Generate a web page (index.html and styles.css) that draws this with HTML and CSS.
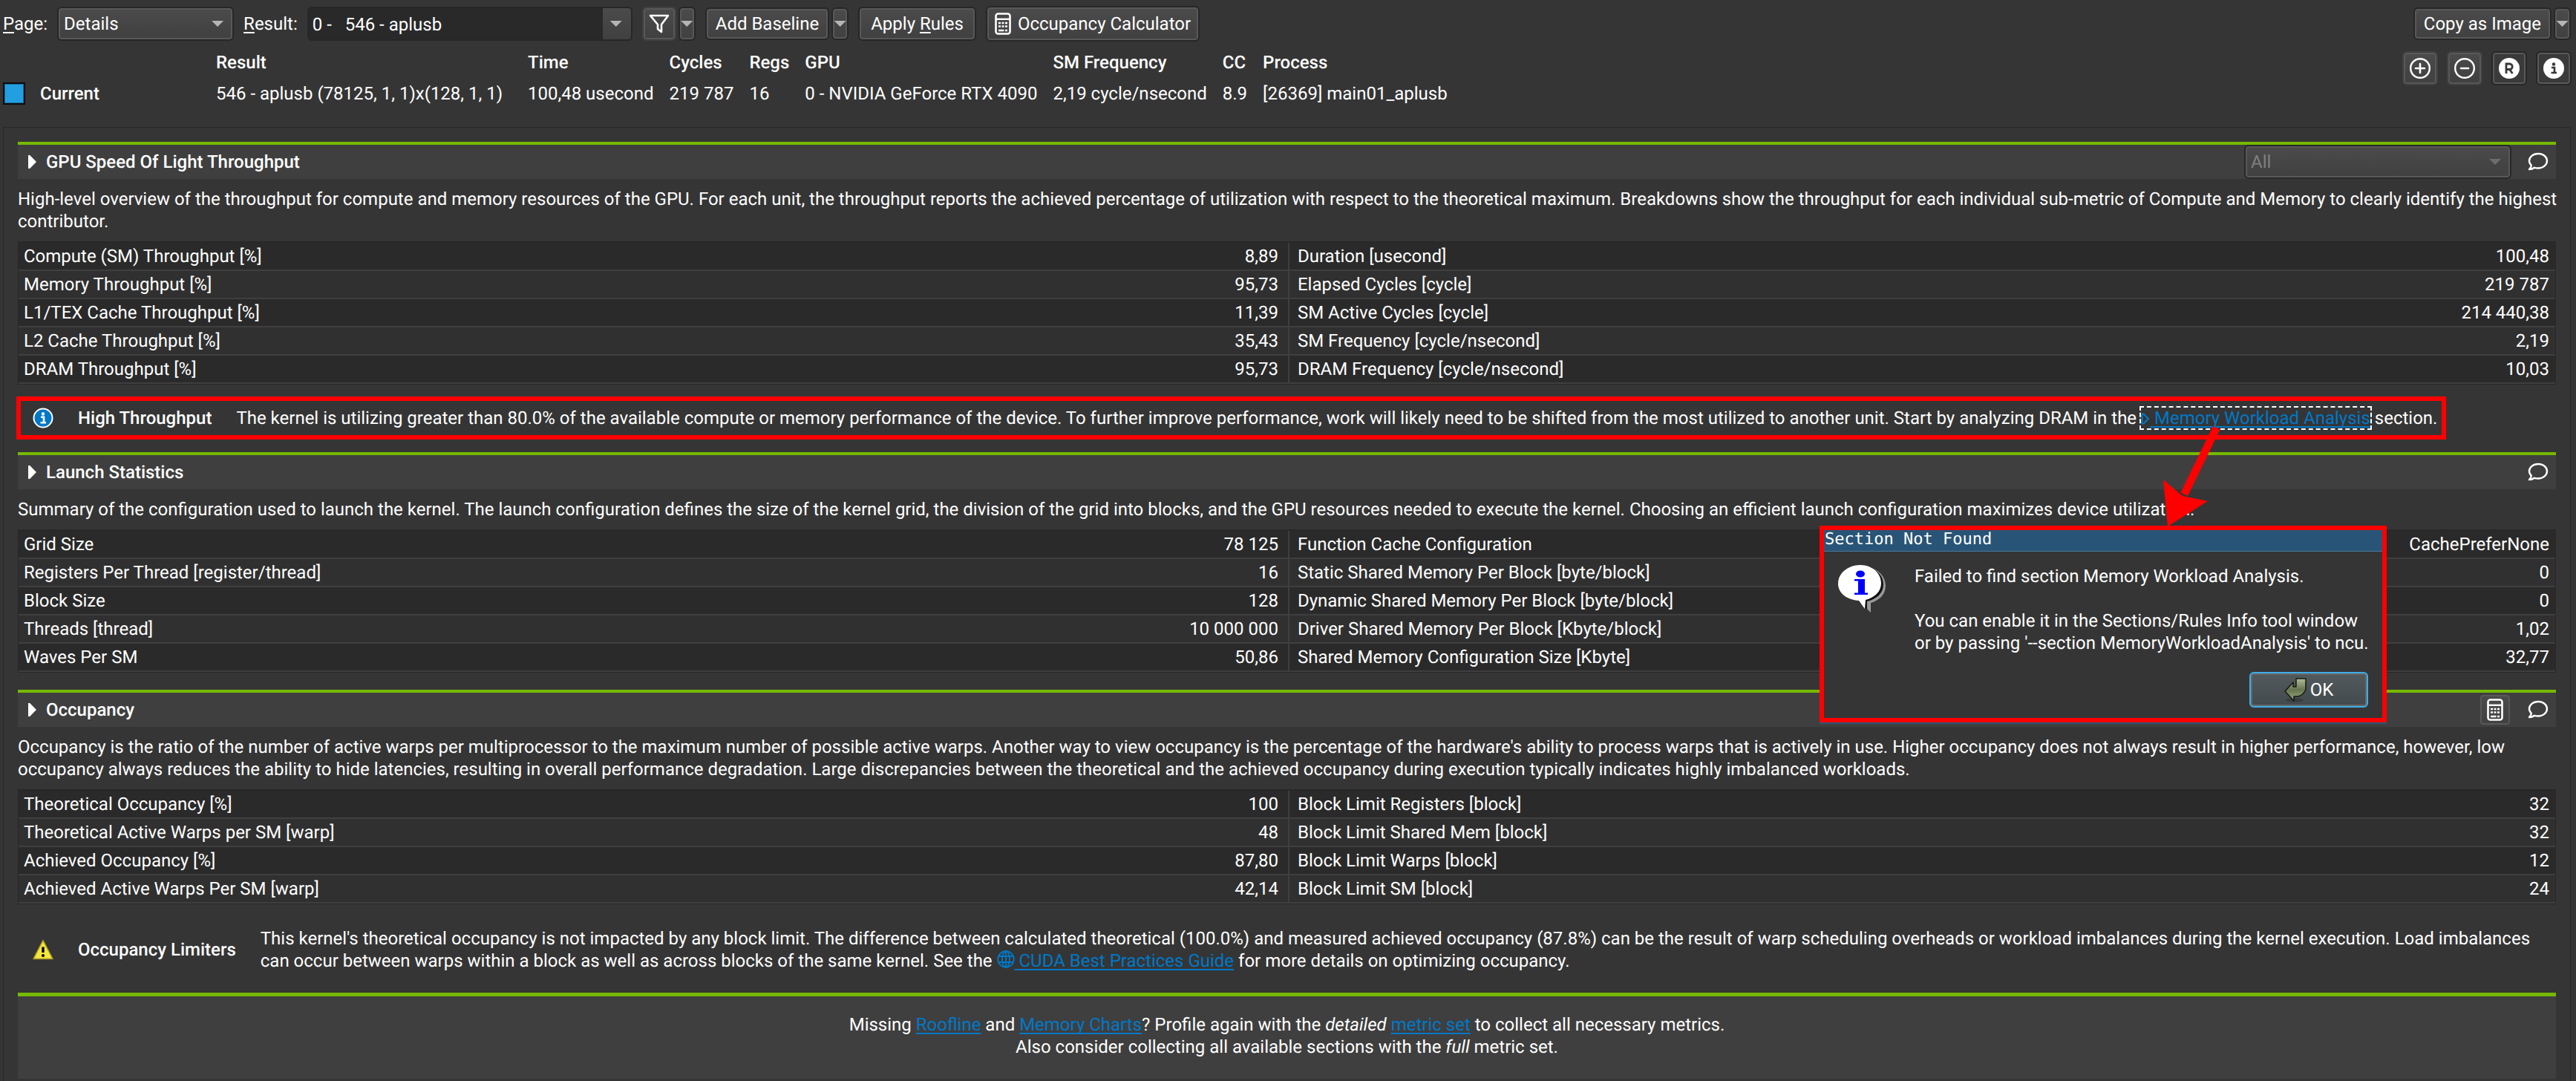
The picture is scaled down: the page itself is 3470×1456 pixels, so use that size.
FILE: index.html
```html
<!DOCTYPE html>
<html lang="en">
<head>
<meta charset="utf-8">
<title>Details - aplusb</title>
<link rel="stylesheet" href="styles.css">
</head>
<body>
<svg class="sprite" aria-hidden="true">
  <symbol id="bubble" viewBox="0 0 28 26"><path d="M14 2C7.300 2 2 6.300 2 11.600c0 2.500 1.100 4.600 2.900 6.300-.3 1.900-1.300 3.600-2.900 5.200 2.700 0 5-.8 7-2.300 1.600.5 3.200.7 5 .7 6.700 0 12-4.300 12-9.900S20.700 2 14 2z" fill="none" stroke="#fff" stroke-width="2.400" stroke-linejoin="round"/></symbol>
  <symbol id="calc" viewBox="0 0 22 30"><rect x="1.500" y="1.500" width="19" height="27" rx="3" fill="none" stroke="#fff" stroke-width="2.600"/><path d="M2 8.800h18" stroke="#fff" stroke-width="2.400"/><path d="M5 14h3M9.500 14h3M14 14h3M5 18.500h3M9.500 18.500h3M14 18.500h3M5 24h7.500M14 24h3" stroke="#fff" stroke-width="2.600"/></symbol>
</svg>

<header class="toolbar">
  <label for="page"><u>P</u>age:</label>
  <span class="combo combo-page"><select id="page"><option>Details</option></select></span>
  <label for="result"><u>R</u>esult:</label>
  <span class="combo combo-result"><select id="result"><option>0 -&nbsp;&nbsp; 546 - aplusb</option></select></span>
  <span class="split">
    <button class="btn btn-flat btn-filter" aria-label="Filter"><svg width="28" height="26" viewBox="0 0 28 26"><path d="M2 2h24L17 14v10l-5-4v-6z" fill="none" stroke="#fff" stroke-width="2.600" stroke-linejoin="round"/></svg></button>
    <button class="btn btn-drop btn-tall" aria-label="Filter options"></button>
  </span>
  <span class="split">
    <button class="btn">Add Baseline</button>
    <button class="btn btn-drop" aria-label="Baseline options"></button>
  </span>
  <button class="btn btn-tall btn-wide"><span>Apply <u>R</u>ules</span></button>
  <button class="btn btn-tallest"><svg width="22" height="30"><use href="#calc"/></svg>Occupancy Calculator</button>
  <span class="split push">
    <button class="btn">Copy as Image</button>
    <button class="btn btn-drop" aria-label="Copy options"></button>
  </span>
</header>

<div class="summary">
  <table class="results">
    <thead><tr><th class="col-name"></th><th class="col-result">Result</th><th>Time</th><th>Cycles</th><th>Regs</th><th>GPU</th><th>SM Frequency</th><th>CC</th><th>Process</th></tr></thead>
    <tbody><tr><th><span class="current"><i class="swatch"></i>Current</span></th><td>546 - aplusb (78125, 1, 1)x(128, 1, 1)</td><td>100,48 usecond</td><td>219 787</td><td>16</td><td>0 - NVIDIA GeForce RTX 4090</td><td>2,19 cycle/nsecond</td><td>8.9</td><td>[26369] main01_aplusb</td></tr></tbody>
  </table>
  <div class="tools">
    <button class="btn btn-flat btn-icon" aria-label="Expand all"><svg width="30" height="30" viewBox="0 0 30 30"><g fill="none" stroke="#fff"><circle cx="15" cy="15" r="12.800" stroke-width="2.400"/><path d="M9 15h12M15 9v12" stroke-width="2.600" stroke-linecap="round"/></g></svg></button>
    <button class="btn btn-flat btn-icon" aria-label="Collapse all"><svg width="30" height="30" viewBox="0 0 30 30"><g fill="none" stroke="#fff"><circle cx="15" cy="15" r="12.800" stroke-width="2.400"/><path d="M10 15h10" stroke-width="2.600" stroke-linecap="round"/></g></svg></button>
    <button class="btn btn-icon btn-on" aria-label="Rules"><svg width="30" height="30" viewBox="0 0 30 30"><circle cx="15" cy="15" r="14" fill="#fff"/><path d="M11 22V9h4.500a3.500 3.500 0 0 1 0 7.500H11M15.500 16.500L19.500 22" fill="none" stroke="#383838" stroke-width="2.800"/></svg></button>
    <button class="btn btn-icon btn-on" aria-label="Info"><svg width="30" height="30" viewBox="0 0 30 30"><circle cx="15" cy="15" r="14" fill="#fff"/><circle cx="15" cy="9.500" r="2.200" fill="#383838"/><path d="M12 14h4v7M11.500 21h7.500" fill="none" stroke="#383838" stroke-width="2.600"/></svg></button>
  </div>
</div>

<main class="frame">
  <section class="section">
    <div class="bar">
      <h2>GPU Speed Of Light Throughput</h2>
      <span class="combo combo-all"><select disabled aria-label="Breakdown"><option>All</option></select></span>
      <button class="plain" aria-label="Comment"><svg width="28" height="26"><use href="#bubble"/></svg></button>
    </div>
    <p class="about">High-level overview of the throughput for compute and memory resources of the GPU. For each unit, the throughput reports the achieved percentage of utilization with respect to the theoretical maximum. Breakdowns show the throughput for each individual sub-metric of Compute and Memory to clearly identify the highest contributor.</p>
    <table class="metrics">
      <tr><td>Compute (SM) Throughput [%]</td><td>8,89</td><td>Duration [usecond]</td><td>100,48</td></tr>
      <tr><td>Memory Throughput [%]</td><td>95,73</td><td>Elapsed Cycles [cycle]</td><td>219 787</td></tr>
      <tr><td>L1/TEX Cache Throughput [%]</td><td>11,39</td><td>SM Active Cycles [cycle]</td><td>214 440,38</td></tr>
      <tr><td>L2 Cache Throughput [%]</td><td>35,43</td><td>SM Frequency [cycle/nsecond]</td><td>2,19</td></tr>
      <tr><td>DRAM Throughput [%]</td><td>95,73</td><td>DRAM Frequency [cycle/nsecond]</td><td>10,03</td></tr>
    </table>
    <div class="rule rule-marked">
      <svg class="rule-icon" width="28" height="28" viewBox="0 0 28 28"><circle cx="14" cy="14" r="12.500" fill="#0078c8" stroke="#fff" stroke-width="2"/><circle cx="14" cy="8.500" r="2.200" fill="#fff"/><path d="M11 12.800h4v7M10.500 20.300h7.500" fill="none" stroke="#fff" stroke-width="2.600"/></svg>
      <h3>High Throughput</h3>
      <p>The kernel is utilizing greater than 80.0% of the available compute or memory performance of the device. To further improve performance, work will likely need to be shifted from the most utilized to another unit. Start by analyzing DRAM in the <a class="focused" href="#memory"><svg class="glyph" width="12" height="18" viewBox="0 0 12 18"><path d="M1.500 2.500v13h2l6.500-6.500-6.500-6.500z" fill="none" stroke="#0078c8" stroke-width="2.200" stroke-linejoin="round"/></svg> Memory Workload Analysis</a> section.</p>
    </div>
  </section>

  <section class="section">
    <div class="bar">
      <h2>Launch Statistics</h2>
      <button class="plain" aria-label="Comment"><svg width="28" height="26"><use href="#bubble"/></svg></button>
    </div>
    <p class="about">Summary of the configuration used to launch the kernel. The launch configuration defines the size of the kernel grid, the division of the grid into blocks, and the GPU resources needed to execute the kernel. Choosing an efficient launch configuration maximizes device utilization.</p>
    <table class="metrics metrics-last">
      <tr><td>Grid Size</td><td>78 125</td><td>Function Cache Configuration</td><td>CachePreferNone</td></tr>
      <tr><td>Registers Per Thread [register/thread]</td><td>16</td><td>Static Shared Memory Per Block [byte/block]</td><td>0</td></tr>
      <tr><td>Block Size</td><td>128</td><td>Dynamic Shared Memory Per Block [byte/block]</td><td>0</td></tr>
      <tr><td>Threads [thread]</td><td>10 000 000</td><td>Driver Shared Memory Per Block [Kbyte/block]</td><td>1,02</td></tr>
      <tr><td>Waves Per SM</td><td>50,86</td><td>Shared Memory Configuration Size [Kbyte]</td><td>32,77</td></tr>
    </table>
  </section>

  <section class="section">
    <div class="bar">
      <h2>Occupancy</h2>
      <button class="btn btn-flat btn-calc" aria-label="Occupancy calculator"><svg width="22" height="30"><use href="#calc"/></svg></button>
      <button class="plain" aria-label="Comment"><svg width="28" height="26"><use href="#bubble"/></svg></button>
    </div>
    <p class="about">Occupancy is the ratio of the number of active warps per multiprocessor to the maximum number of possible active warps. Another way to view occupancy is the percentage of the hardware's ability to process warps that is actively in use. Higher occupancy does not always result in higher performance, however, low occupancy always reduces the ability to hide latencies, resulting in overall performance degradation. Large discrepancies between the theoretical and the achieved occupancy during execution typically indicates highly imbalanced workloads.</p>
    <table class="metrics">
      <tr><td>Theoretical Occupancy [%]</td><td>100</td><td>Block Limit Registers [block]</td><td>32</td></tr>
      <tr><td>Theoretical Active Warps per SM [warp]</td><td>48</td><td>Block Limit Shared Mem [block]</td><td>32</td></tr>
      <tr><td>Achieved Occupancy [%]</td><td>87,80</td><td>Block Limit Warps [block]</td><td>12</td></tr>
      <tr><td>Achieved Active Warps Per SM [warp]</td><td>42,14</td><td>Block Limit SM [block]</td><td>24</td></tr>
    </table>
    <div class="rule">
      <svg class="rule-icon" width="28" height="28" viewBox="0 0 28 28"><path d="M14 1.500L27 26.500H1z" fill="#f5e63c" stroke="#a8992a" stroke-width="1.500" stroke-linejoin="round"/><path d="M12.300 10.500h3.400v7.500h-3.400z"/><circle cx="14" cy="22" r="2.100"/></svg>
      <h3>Occupancy Limiters</h3>
      <p>This kernel's theoretical occupancy is not impacted by any block limit. The difference between calculated theoretical (100.0%) and measured achieved occupancy (87.8%) can be the result of warp scheduling overheads or workload imbalances during the kernel execution. Load imbalances can occur between warps within a block as well as across blocks of the same kernel. See the <a href="#guide"><svg class="glyph" width="24" height="24" viewBox="0 0 24 24"><g fill="none" stroke="#0078c8" stroke-width="1.800"><circle cx="12" cy="12" r="10.800"/><ellipse cx="12" cy="12" rx="5" ry="10.800"/><path d="M12 1.500v21M2.500 8h19M2.500 16h19"/></g></svg> CUDA Best Practices Guide</a> for more details on optimizing occupancy.</p>
    </div>
  </section>

  <footer class="missing">
    <p>Missing <a href="#roofline">Roofline</a> and <a href="#charts">Memory Charts</a>? Profile again with the <em>detailed</em> <a href="#sets">metric set</a> to collect all necessary metrics.</p>
    <p>Also consider collecting all available sections with the <em>full</em> metric set.</p>
  </footer>
</main>

<svg class="pointer" width="76" height="135" viewBox="2914 574 76 135" aria-hidden="true"><path d="M2981 574l9.500 4.500-43.500 89.500-9.500-4.500z" fill="#f00"/><path d="M2914 646l26 22 34 7-54 34z" fill="#f00"/></svg>

<div class="dialog" role="dialog" aria-labelledby="dialog-title">
  <div class="dialog-title" id="dialog-title">Section Not Found</div>
  <div class="dialog-body">
    <svg width="64" height="64" viewBox="0 0 64 64"><path d="M36 3C52 3 64 14 64 28c0 12-9 20-20 23v13l-12-12z" fill="#999"/><path d="M33 2C49 2 61 13 61 26c0 12-9 20-22 23v11L28 49z" fill="#111"/><path d="M30 0C46 0 58 11 58 24.500 58 36 49 44 37 47l-1 12-8-11C12 47 0 38 0 25 0 11 13 0 30 0z" fill="#fff"/><ellipse cx="30" cy="12" rx="6" ry="4.500" fill="#00f"/><path d="M22 19h14v18.500h4V40H22v-2.500h5V21.500h-5z" fill="#00f"/></svg>
    <div class="dialog-text">
      <p>Failed to find section Memory Workload Analysis.</p>
      <p>You can enable it in the Sections/Rules Info tool window<br>or by passing '--section MemoryWorkloadAnalysis' to ncu.</p>
    </div>
  </div>
  <div class="dialog-actions">
    <button class="btn btn-ok"><svg width="30" height="44" viewBox="0 0 30 44"><defs><linearGradient id="ok" x1="0" y1="0" x2="0" y2="1"><stop offset="0" stop-color="#b0bd9a"/><stop offset=".5" stop-color="#66754f"/><stop offset="1" stop-color="#9cac80"/></linearGradient></defs><ellipse cx="14" cy="36" rx="12" ry="3" fill="#383e40"/><path d="M16 7h13v15q-4 8-11 9h-5v6L1 24l11-12v6h4z" fill="url(#ok)" stroke="#161a10" stroke-width="1.500" stroke-linejoin="round"/></svg>OK</button>
  </div>
</div>
</body>
</html>
```
FILE: styles.css
```css
* { box-sizing: border-box; }

body {
  position: relative;
  margin: 0;
  background: #353535;
  color: #fff;
  font: 24px/30px Roboto, "Liberation Sans", sans-serif;
  text-rendering: geometricPrecision;
}

p, h2, h3 { margin: 0; font-size: 24px; }
h2, h3, th { font-weight: 500; }

a {
  color: #0078c8;
  text-decoration-thickness: 2px;
  text-underline-offset: 3px;
  text-decoration-skip-ink: none;
}

u {
  text-decoration-thickness: 2px;
  text-underline-offset: 3px;
}

svg { display: block; flex: none; }
.sprite { position: absolute; width: 0; height: 0; }
.glyph { display: inline-block; vertical-align: -2px; }

/* Controls */
.btn, select {
  font: inherit;
  color: inherit;
  text-rendering: inherit;
  border: 2px solid #272727;
  border-radius: 6px;
  background: linear-gradient(#4b4b4b, #404040);
  box-shadow: inset 0 0 0 2px #585858;
}

.btn {
  display: flex;
  align-items: center;
  justify-content: center;
  gap: 9px;
  height: 44px;
  padding: 0 12px;
  white-space: nowrap;
}

.btn-tall { height: 46px; }
.btn-tallest { height: 48px; padding: 0 10px; }
.btn-wide { padding: 0 15px; }
.btn-flat { border-color: #404040; }
.btn-filter { width: 46px; height: 46px; padding: 0; }
.btn-icon { width: 48px; height: 46px; padding: 0; }
.btn-on { background: #3a3a3a; }
.btn-calc { width: 44px; height: 44px; padding: 0; }
.btn-drop { width: 23px; padding: 0; }

.btn-drop::before, .combo::after {
  content: "";
  flex: none;
  width: 16px;
  height: 8px;
  background: #b5b5b5;
  clip-path: polygon(0 0, 100% 0, 50% 100%);
}

.split { display: flex; align-items: center; gap: 3px; }
.push { margin-left: auto; }

.plain { padding: 0; border: 0; background: none; }

.combo { display: grid; align-items: center; }
.combo select, .combo::after { grid-area: 1 / 1; }
.combo::after { justify-self: end; margin-right: 14px; pointer-events: none; }

select {
  width: 100%;
  height: 46px;
  padding: 0 7px;
  appearance: none;
}

.combo-page { width: 238px; }
.combo-result { width: 438px; }
.combo-result select {
  padding: 2px 5px 0;
  background: linear-gradient(#4b4b4b, #404040) right / 38px 100% no-repeat, #292929;
  box-shadow: none;
}
.combo-all { width: 360px; margin-right: 22px; }
.combo-all select { color: #808080; opacity: 1; }
.combo-all::after { background: #6c6c6c; }

/* Top of the report */
.toolbar {
  display: flex;
  align-items: center;
  gap: 13px;
  padding: 8px 7px 7px 4px;
}

.summary {
  display: flex;
  align-items: flex-start;
  justify-content: space-between;
  padding: 0 6px 24px 4px;
}

.results { border-collapse: collapse; white-space: nowrap; }
.results th, .results td {
  height: 42px;
  padding: 0 21px 0 0;
  text-align: left;
}
.results .col-name { width: 287px; }
.results .col-result { width: 420px; }

.current { display: flex; align-items: center; gap: 20px; }
.swatch {
  width: 30px;
  height: 30px;
  border: 2px solid #0c0c0c;
  background: #229fe0;
  box-shadow: inset 0 0 0 1px #1a6e9e;
}

.tools { display: flex; gap: 12px; padding-top: 6px; }

/* Sections */
.frame {
  margin: 0 7px 0 4px;
  padding: 19px 19px 3px;
  border: 1px solid #282828;
  border-bottom: 0;
}

.bar {
  display: flex;
  align-items: center;
  height: 50px;
  padding-right: 10px;
  border-top: 4px solid #76b900;
  background: #3f3f3f;
}

.bar h2 {
  display: flex;
  align-items: center;
  gap: 13px;
  margin-right: auto;
  padding-left: 14px;
}

.bar h2::before {
  content: "";
  width: 11px;
  height: 18px;
  background: #fff;
  clip-path: polygon(0 0, 20% 0, 100% 50%, 20% 100%, 0 100%);
}

.btn-calc { margin-right: 22px; }

.about { margin-right: -12px; padding: 12px 0; }

.metrics {
  width: 100%;
  table-layout: fixed;
  border: 1px solid #282828;
  border-top-width: 2px;
  border-spacing: 0;
}

.metrics td {
  width: 25%;
  height: 38px;
  padding: 0 8px 0 7px;
  border-bottom: 2px solid #3f3f3f;
  background: #2a2a2a;
}
.metrics tr:nth-child(even) td { background: #303030; }
.metrics td:nth-child(even) { text-align: right; }
.metrics td:nth-child(2) { width: auto; padding-right: 13px; border-right: 2px solid #3f3f3f; }
.metrics td:nth-child(3) { width: 20%; padding-left: 11px; }
.metrics td:nth-child(4) { width: 29.9%; }
.metrics-last { margin-bottom: 23px; }

.rule {
  display: flex;
  align-items: center;
  gap: 33px;
  padding: 31px 20px 28px;
}

.rule h3 { white-space: nowrap; }

.rule-marked {
  width: fit-content;
  margin: 16px 0 17px -2px;
  padding: 8px 6px 8px 16px;
  border: 6px solid #f00;
}

.focused { outline: 2px dashed #fff; }

.missing {
  padding: 23px 0 28px;
  border-top: 5px solid #76b900;
  background: #3f3f3f;
  text-align: center;
}

/* Overlays */
.pointer { position: absolute; top: 574px; right: 480px; }

.dialog {
  position: absolute;
  top: 708px;
  right: 255px;
  width: 764px;
  border: 6px solid #f00;
  background: #353535;
  box-shadow: 0 2px 0 #285577;
}

.dialog-title {
  height: 29px;
  padding-left: 1px;
  border-bottom: 1px solid #4c7899;
  background: #285577;
  font: 22px/26px "DejaVu Sans Mono", monospace;
}

.dialog-body {
  display: flex;
  gap: 39px;
  padding: 18px 19px 0;
}

.dialog-text { display: grid; gap: 30px; white-space: nowrap; }

.dialog-actions {
  display: flex;
  justify-content: flex-end;
  padding: 24px 19px 14px;
}

.btn-ok {
  gap: 5px;
  width: 160px;
  height: 48px;
  border-color: #3daee9;
  background: linear-gradient(#525a5d, #434a4d);
  box-shadow: inset 0 0 0 2px #666;
}
```
